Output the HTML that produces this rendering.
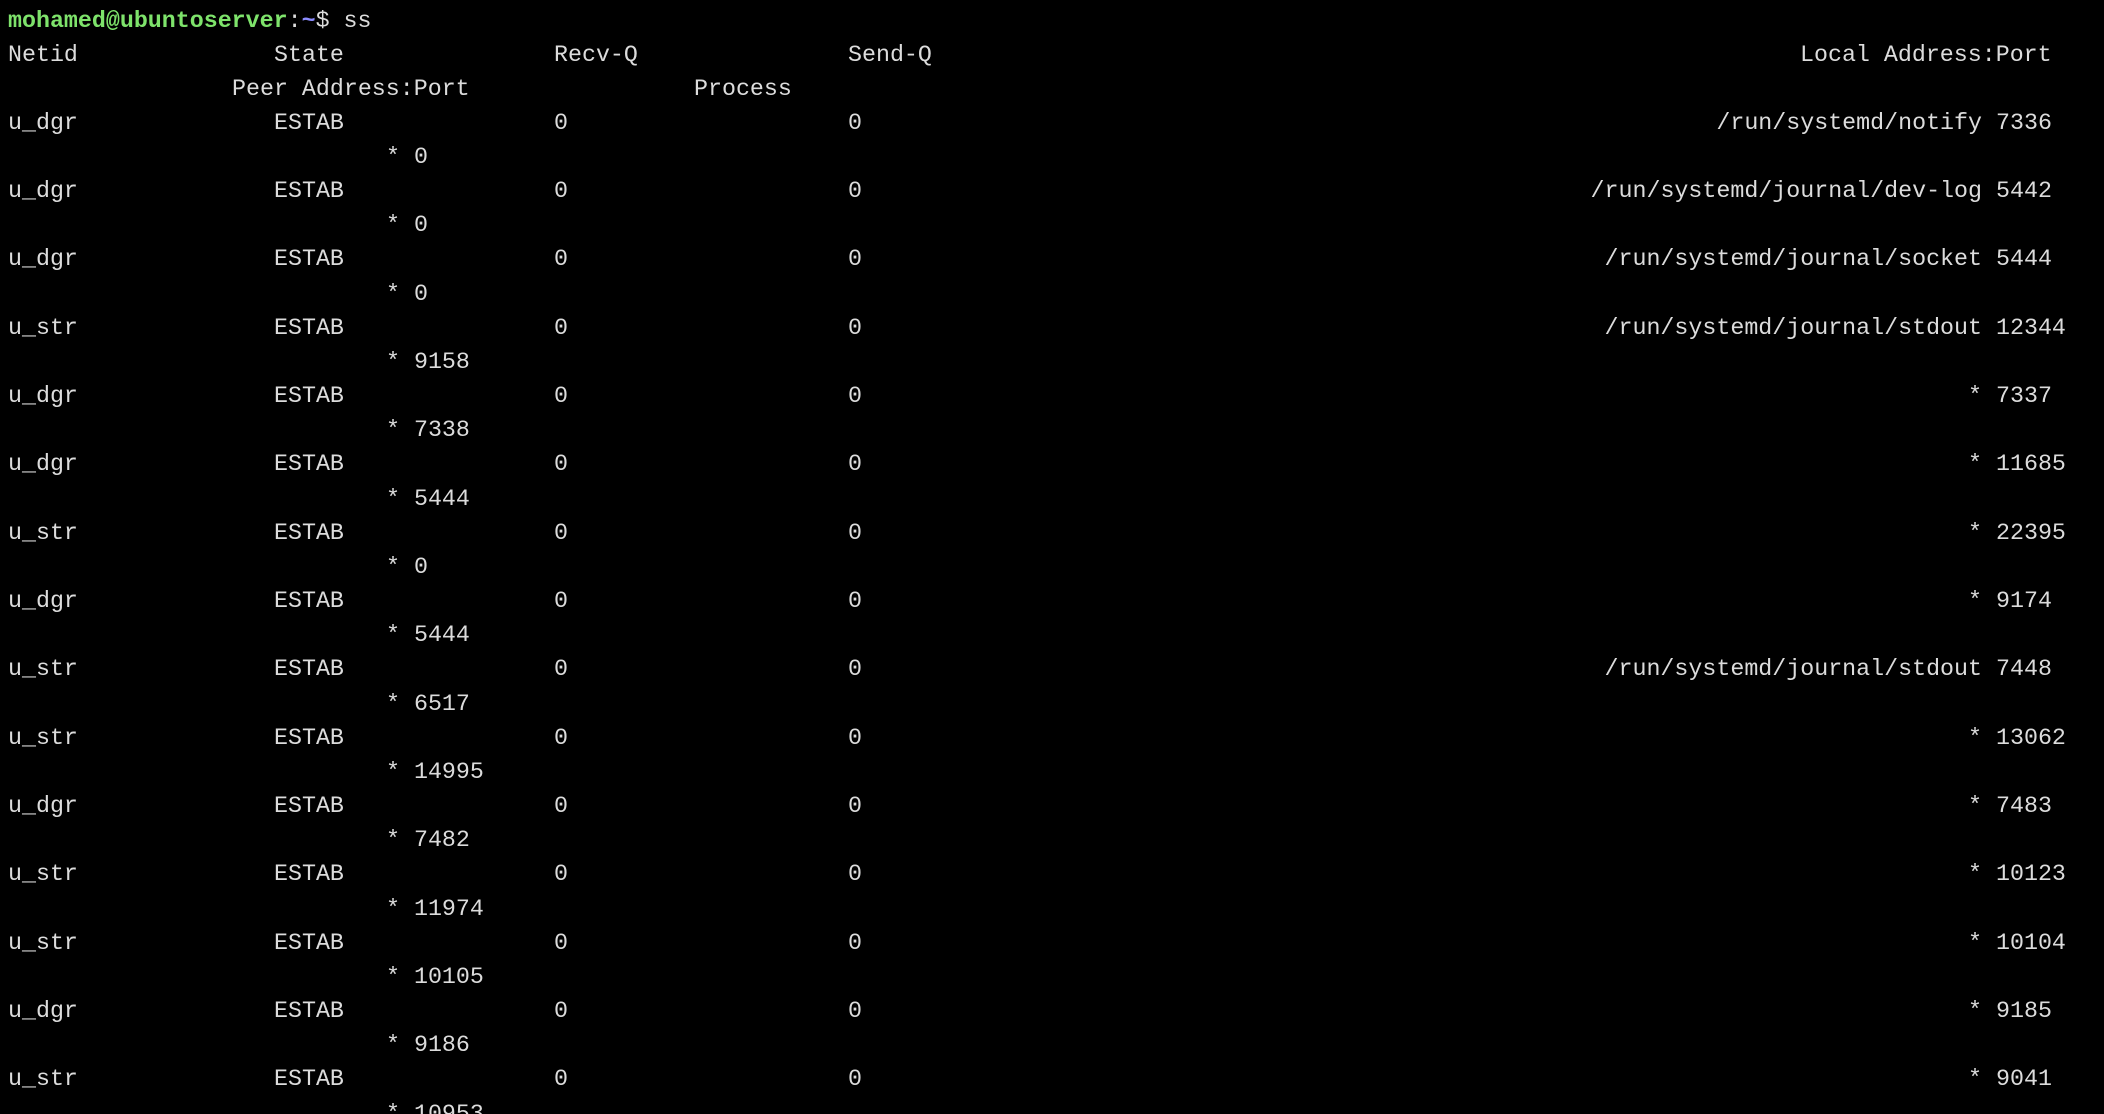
<!DOCTYPE html>
<html><head><meta charset="utf-8"><style>
html,body{margin:0;padding:0;background:#000;width:2104px;height:1114px;overflow:hidden}
body{position:relative;font-family:"Liberation Mono",monospace;font-size:23.3px;color:#dcdcdc}
#w{position:absolute;left:0;top:2px;width:2104px;height:1114px}
.l{position:absolute;left:0;width:2104px;height:34px;line-height:34px;white-space:pre}
.l span{position:absolute;top:0}
.a{left:8px}.b{left:274px}.c{left:554px}.d{left:848px}.p{left:232px}.q{left:694px}.s{left:386px}
.r{right:122px;text-align:right}.t{left:1996px}
.g{color:#7ee36b;font-weight:bold}.u{color:#8c8cff;font-weight:bold}
</style></head><body><div id="w">
<div class="l" style="top:2px"><span class="a"><span class="g" style="position:static">mohamed@ubuntoserver</span>:<span class="u" style="position:static">~</span>$ ss</span></div>
<div class="l" style="top:36px"><span class="a">Netid</span><span class="b">State</span><span class="c">Recv-Q</span><span class="d">Send-Q</span><span style="left:1800px">Local Address:Port</span></div>
<div class="l" style="top:70px"><span class="p">Peer Address:Port</span><span class="q">Process</span></div>

<div class="l" style="top:104px"><span class="a">u_dgr</span><span class="b">ESTAB</span><span class="c">0</span><span class="d">0</span><span class="r">/run/systemd/notify</span><span class="t">7336</span></div>
<div class="l" style="top:138px"><span class="s">* 0</span></div>
<div class="l" style="top:172px"><span class="a">u_dgr</span><span class="b">ESTAB</span><span class="c">0</span><span class="d">0</span><span class="r">/run/systemd/journal/dev-log</span><span class="t">5442</span></div>
<div class="l" style="top:206px"><span class="s">* 0</span></div>
<div class="l" style="top:240px"><span class="a">u_dgr</span><span class="b">ESTAB</span><span class="c">0</span><span class="d">0</span><span class="r">/run/systemd/journal/socket</span><span class="t">5444</span></div>
<div class="l" style="top:275px"><span class="s">* 0</span></div>
<div class="l" style="top:309px"><span class="a">u_str</span><span class="b">ESTAB</span><span class="c">0</span><span class="d">0</span><span class="r">/run/systemd/journal/stdout</span><span class="t">12344</span></div>
<div class="l" style="top:343px"><span class="s">* 9158</span></div>
<div class="l" style="top:377px"><span class="a">u_dgr</span><span class="b">ESTAB</span><span class="c">0</span><span class="d">0</span><span class="r">*</span><span class="t">7337</span></div>
<div class="l" style="top:411px"><span class="s">* 7338</span></div>
<div class="l" style="top:445px"><span class="a">u_dgr</span><span class="b">ESTAB</span><span class="c">0</span><span class="d">0</span><span class="r">*</span><span class="t">11685</span></div>
<div class="l" style="top:480px"><span class="s">* 5444</span></div>
<div class="l" style="top:514px"><span class="a">u_str</span><span class="b">ESTAB</span><span class="c">0</span><span class="d">0</span><span class="r">*</span><span class="t">22395</span></div>
<div class="l" style="top:548px"><span class="s">* 0</span></div>
<div class="l" style="top:582px"><span class="a">u_dgr</span><span class="b">ESTAB</span><span class="c">0</span><span class="d">0</span><span class="r">*</span><span class="t">9174</span></div>
<div class="l" style="top:616px"><span class="s">* 5444</span></div>
<div class="l" style="top:650px"><span class="a">u_str</span><span class="b">ESTAB</span><span class="c">0</span><span class="d">0</span><span class="r">/run/systemd/journal/stdout</span><span class="t">7448</span></div>
<div class="l" style="top:685px"><span class="s">* 6517</span></div>
<div class="l" style="top:719px"><span class="a">u_str</span><span class="b">ESTAB</span><span class="c">0</span><span class="d">0</span><span class="r">*</span><span class="t">13062</span></div>
<div class="l" style="top:753px"><span class="s">* 14995</span></div>
<div class="l" style="top:787px"><span class="a">u_dgr</span><span class="b">ESTAB</span><span class="c">0</span><span class="d">0</span><span class="r">*</span><span class="t">7483</span></div>
<div class="l" style="top:821px"><span class="s">* 7482</span></div>
<div class="l" style="top:855px"><span class="a">u_str</span><span class="b">ESTAB</span><span class="c">0</span><span class="d">0</span><span class="r">*</span><span class="t">10123</span></div>
<div class="l" style="top:890px"><span class="s">* 11974</span></div>
<div class="l" style="top:924px"><span class="a">u_str</span><span class="b">ESTAB</span><span class="c">0</span><span class="d">0</span><span class="r">*</span><span class="t">10104</span></div>
<div class="l" style="top:958px"><span class="s">* 10105</span></div>
<div class="l" style="top:992px"><span class="a">u_dgr</span><span class="b">ESTAB</span><span class="c">0</span><span class="d">0</span><span class="r">*</span><span class="t">9185</span></div>
<div class="l" style="top:1026px"><span class="s">* 9186</span></div>
<div class="l" style="top:1060px"><span class="a">u_str</span><span class="b">ESTAB</span><span class="c">0</span><span class="d">0</span><span class="r">*</span><span class="t">9041</span></div>
<div class="l" style="top:1095px"><span class="s">* 10953</span></div>
</div></body></html>
